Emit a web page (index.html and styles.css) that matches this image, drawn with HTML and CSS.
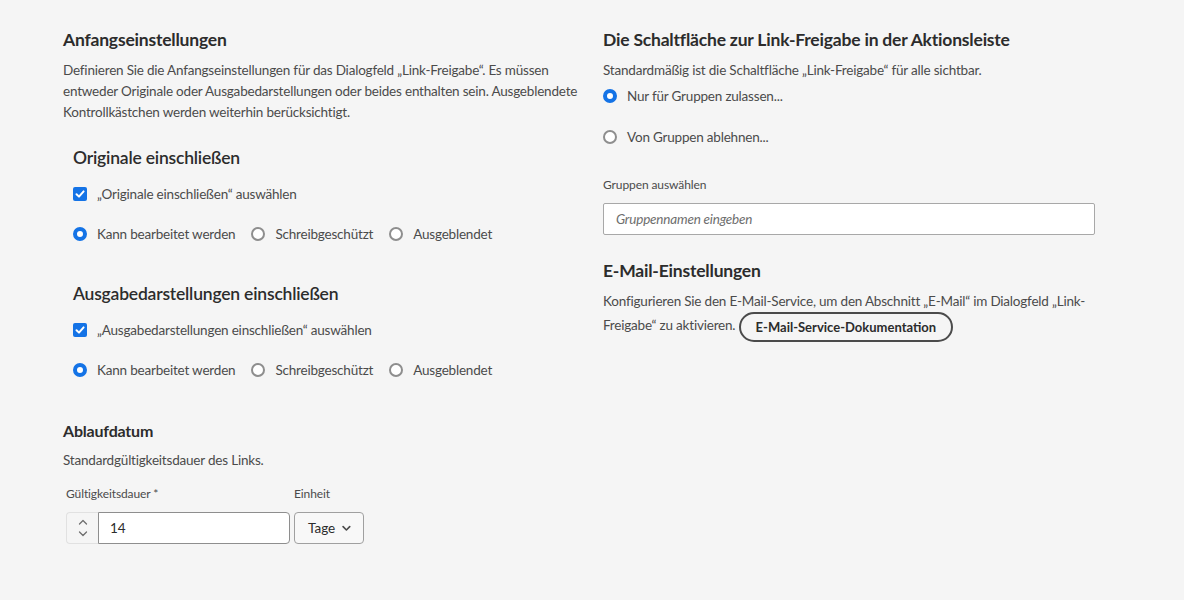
FILE: index.html
```html
<!DOCTYPE html>
<html lang="de">
<head>
<meta charset="utf-8">
<link rel="stylesheet" href="styles.css">
</head>
<body>
<div class="page">
  <div class="col">
    <h2 class="h-main">Anfangseinstellungen</h2>
    <p class="para">Definieren Sie die Anfangseinstellungen für das Dialogfeld „Link-Freigabe“. Es müssen entweder Originale oder Ausgabedarstellungen oder beides enthalten sein. Ausgeblendete Kontrollkästchen werden weiterhin berücksichtigt.</p>

    <div class="group">
      <h3 class="h-sub">Originale einschließen</h3>
      <label class="check"><span class="box"><svg viewBox="0 0 14 14" width="14" height="14"><path d="M3.5 7.2 L6 9.6 L10.6 4.4" fill="none" stroke="#fff" stroke-width="2" stroke-linecap="round" stroke-linejoin="round"/></svg></span>„Originale einschließen“ auswählen</label>
      <div class="radios">
        <label class="radio"><span class="dot on"></span>Kann bearbeitet werden</label>
        <label class="radio"><span class="dot"></span>Schreibgeschützt</label>
        <label class="radio"><span class="dot"></span>Ausgeblendet</label>
      </div>
    </div>

    <div class="group group2">
      <h3 class="h-sub">Ausgabedarstellungen einschließen</h3>
      <label class="check"><span class="box"><svg viewBox="0 0 14 14" width="14" height="14"><path d="M3.5 7.2 L6 9.6 L10.6 4.4" fill="none" stroke="#fff" stroke-width="2" stroke-linecap="round" stroke-linejoin="round"/></svg></span>„Ausgabedarstellungen einschließen“ auswählen</label>
      <div class="radios">
        <label class="radio"><span class="dot on"></span>Kann bearbeitet werden</label>
        <label class="radio"><span class="dot"></span>Schreibgeschützt</label>
        <label class="radio"><span class="dot"></span>Ausgeblendet</label>
      </div>
    </div>

    <h4 class="h-small">Ablaufdatum</h4>
    <p class="para">Standardgültigkeitsdauer des Links.</p>
    <div class="fields">
      <div class="field">
        <span class="label">Gültigkeitsdauer *</span>
        <div class="stepper">
          <span class="arrows">
            <svg viewBox="0 0 10 6" width="10" height="6"><path d="M1.5 5 L5 1.5 L8.5 5" fill="none" stroke="#6e6e6e" stroke-width="1.3" stroke-linecap="round" stroke-linejoin="round"/></svg>
            <svg viewBox="0 0 10 6" width="10" height="6"><path d="M1.5 1 L5 4.5 L8.5 1" fill="none" stroke="#6e6e6e" stroke-width="1.3" stroke-linecap="round" stroke-linejoin="round"/></svg>
          </span>
          <span class="num">14</span>
        </div>
      </div>
      <div class="field">
        <span class="label">Einheit</span>
        <div class="select">Tage<svg viewBox="0 0 12 8" width="11" height="7"><path d="M1.5 1.5 L6 6 L10.5 1.5" fill="none" stroke="#4b4b4b" stroke-width="2.2" stroke-linecap="round" stroke-linejoin="round"/></svg></div>
      </div>
    </div>
  </div>

  <div class="col">
    <h2 class="h-main">Die Schaltfläche zur Link-Freigabe in der Aktionsleiste</h2>
    <p class="para">Standardmäßig ist die Schaltfläche „Link-Freigabe“ für alle sichtbar.</p>
    <div class="vradios">
      <label class="radio"><span class="dot on"></span>Nur für Gruppen zulassen...</label>
      <label class="radio"><span class="dot"></span>Von Gruppen ablehnen...</label>
    </div>
    <span class="label label-groups">Gruppen auswählen</span>
    <div class="textfield">Gruppennamen eingeben</div>

    <h3 class="h-main h-mail">E-Mail-Einstellungen</h3>
    <p class="para para-mail">Konfigurieren Sie den E-Mail-Service, um den Abschnitt „E-Mail“ im Dialogfeld „Link-Freigabe“ zu aktivieren. <span class="pill">E-Mail-Service-Dokumentation</span></p>
  </div>
</div>
</body>
</html>
```
FILE: styles.css
```css
* { box-sizing: border-box; }
html, body { margin: 0; padding: 0; }
body {
  background: #f5f5f5;
  font-family: "Lato", "Open Sans", sans-serif;
  color: #4b4b4b;
  width: 1184px;
  height: 600px;
  overflow: hidden;
}
.page {
  display: grid;
  grid-template-columns: 520px 492px;
  column-gap: 20px;
  padding: 29px 0 0 63px;
}
.col { display: flex; flex-direction: column; align-items: flex-start; }
.h-main {
  margin: 0;
  font-size: 17.5px;
  letter-spacing: -0.2px;
  font-weight: 700;
  color: #2c2c2c;
  line-height: 22px;
}
.para {
  margin: 9px 0 0;
  font-size: 13.5px;
  letter-spacing: -0.2px;
  line-height: 21px;
}
.group { margin: 24px 0 0 10px; }
.group2 { margin-top: 39px; }
.h-sub {
  margin: 0;
  font-size: 17.5px;
  letter-spacing: -0.2px;
  font-weight: 600;
  color: #2c2c2c;
  line-height: 22px;
}
.check {
  display: flex;
  align-items: center;
  gap: 10px;
  font-size: 13.5px;
  letter-spacing: -0.2px;
  margin-top: 15px;
  height: 20px;
}
.box {
  width: 14px; height: 14px;
  border-radius: 2px;
  background: #1473e6;
  display: inline-flex;
}
.radios {
  display: flex;
  gap: 16px;
  margin-top: 20px;
}
.radio {
  display: flex;
  align-items: center;
  gap: 10px;
  font-size: 13.5px;
  letter-spacing: -0.2px;
  height: 20px;
}
.dot {
  width: 14px; height: 14px;
  border-radius: 50%;
  border: 2px solid #8e8e8e;
  background: #fff;
  flex: none;
}
.dot.on { border: 4px solid #1473e6; }
.h-small {
  margin: 41px 0 0;
  font-size: 16px;
  letter-spacing: -0.2px;
  font-weight: 700;
  color: #2c2c2c;
  line-height: 20px;
}
.fields { display: flex; gap: 4px; margin: 15px 0 0 3px; }
.field { display: flex; flex-direction: column; }
.label { font-size: 12px; color: #4b4b4b; line-height: 16px; letter-spacing: -0.1px; }
.stepper {
  display: flex;
  margin-top: 10px;
  height: 32px;
  width: 224px;
}
.arrows {
  width: 32px;
  border: 1px solid #e1e1e1;
  border-right: none;
  border-radius: 4px 0 0 4px;
  display: flex;
  flex-direction: column;
  align-items: center;
  justify-content: center;
  gap: 6px;
}
.num {
  flex: 1;
  background: #fff;
  border: 1px solid #8e8e8e;
  border-radius: 0 4px 4px 0;
  font-size: 13.5px;
  color: #2c2c2c;
  padding: 0 11px;
  display: flex;
  align-items: center;
}
.select {
  margin-top: 10px;
  height: 32px;
  width: 70px;
  border: 1px solid #a0a0a0;
  border-radius: 4px;
  background: #f8f8f8;
  display: flex;
  align-items: center;
  gap: 7px;
  padding: 0 12px 0 13px;
  font-size: 13.5px;
  color: #2c2c2c;
}
.vradios { display: flex; flex-direction: column; gap: 20px; margin-top: 5px; }
.vradios .radio + .radio { margin-top: 1px; }
.label-groups { margin-top: 30px; }
.textfield {
  margin-top: 10px;
  width: 492px;
  height: 32px;
  background: #fff;
  border: 1px solid #a8a8a8;
  border-radius: 2px;
  font-size: 13.5px;
  letter-spacing: -0.2px;
  font-style: italic;
  color: #6e6e6e;
  padding: 0 12px;
  display: flex;
  align-items: center;
}
.h-mail { margin-top: 25px; }
.para-mail { margin-top: 8px; line-height: 22px; }
.pill {
  display: inline-flex;
  align-items: center;
  height: 30px;
  padding: 0 15px;
  border: 2px solid #4b4b4b;
  border-radius: 15px;
  font-size: 13px;
  letter-spacing: 0;
  font-weight: 700;
  color: #2c2c2c;
  vertical-align: middle;
}
```
